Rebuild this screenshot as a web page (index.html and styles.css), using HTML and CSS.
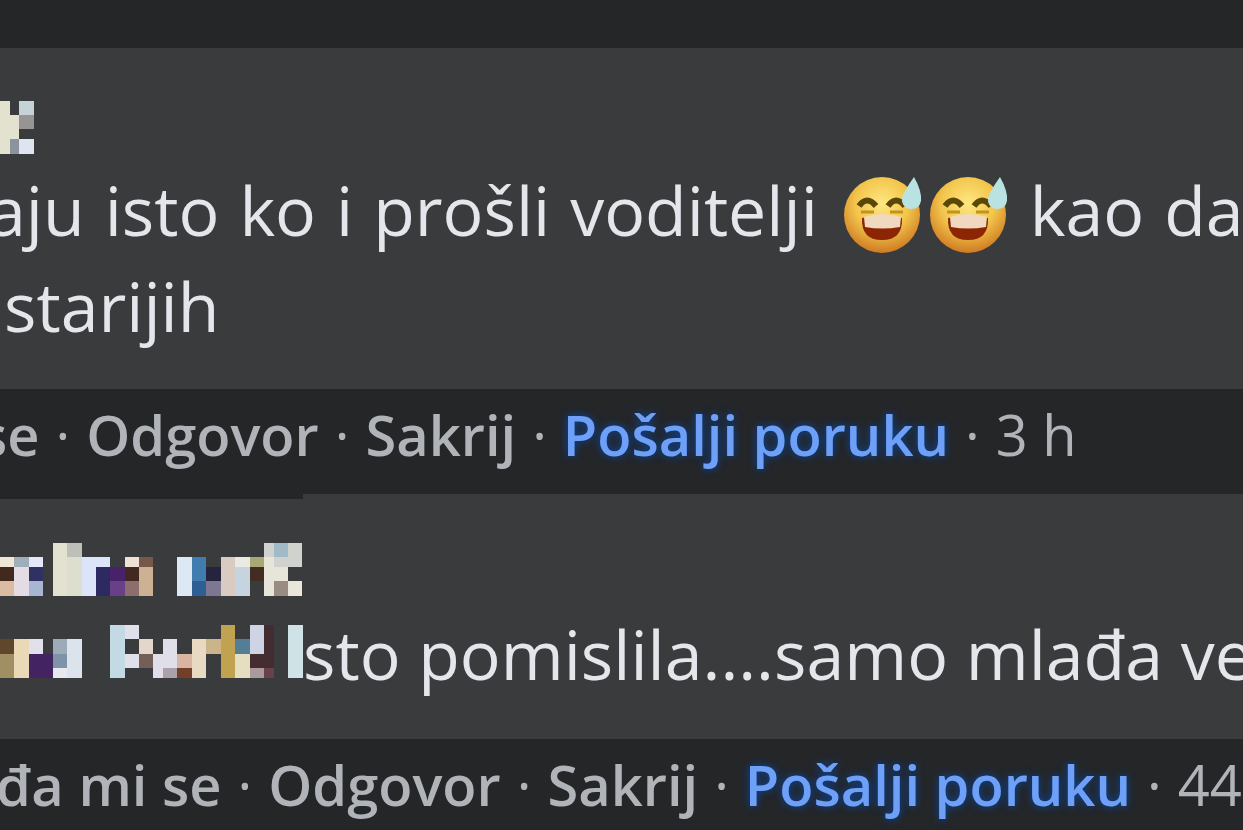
FILE: index.html
```html
<!DOCTYPE html>
<html lang="hr">
<head>
<meta charset="utf-8">
<title>Komentari</title>
<link rel="stylesheet" href="styles.css">
</head>
<body>
<svg class="defs" aria-hidden="true">
  <defs>
    <radialGradient id="face" cx="50%" cy="35%" r="65%">
      <stop offset="0" stop-color="#ffe783"/>
      <stop offset="0.55" stop-color="#f2c54b"/>
      <stop offset="1" stop-color="#cf7a22"/>
    </radialGradient>
    <symbol id="sweat" viewBox="0 0 80 80">
      <circle cx="38" cy="40" r="38" fill="url(#face)"/>
      <path d="M15 31q8-11 17 0M44 31q8-11 17 0" fill="none" stroke="#5c4806" stroke-width="6"/>
      <path d="M17 37h13M46 37h13" stroke="#c2941f" stroke-width="3"/>
      <path d="M18 43q20-4 40 0q1 22-20 22T18 43z" fill="#8c2503"/>
      <path d="M20 42q18-6 37 0l-1 10q-18 3-35 0z" fill="#f0d9bf"/>
      <path d="M70 2q8 14 7 24q-2 9-11 8q-9-2-8-11q2-7 12-21z" fill="#b9e2e2"/>
    </symbol>
  </defs>
</svg>
<main class="thread">
  <article class="comment">
    <div class="bubble">
      <svg class="name" width="302" height="53" aria-hidden="true" shape-rendering="crispEdges">
        <path fill="#e2e2ce" d="M0 0h10v14h9v24h-9v15H0z"/>
        <path fill="#c5d2d8" d="M19 0h15v14H19z"/>
        <path fill="#979594" d="M19 14h15v14H19z"/>
        <path fill="#8b939e" d="M10 38h9v15h-9z"/>
        <path fill="#dfe5f0" d="M19 38h15v15H19z"/>
      </svg>
      <p class="text first"><span>aju</span> <span>isto</span> <span>ko</span> <span>i</span> <span>prošli</span> <span>voditelji</span> <span class="emojis"><svg class="emoji" role="img" aria-label="😅"><use href="#sweat"/></svg><svg class="emoji" role="img" aria-label="😅"><use href="#sweat"/></svg></span> <span>kao</span> <span>da</span></p>
      <p class="text second">starijih</p>
    </div>
    <div class="actions short">
      <button>se</button><i>·</i><button>Odgovor</button><i>·</i><button>Sakrij</button><i>·</i><button class="message">Pošalji poruku</button><i>·</i><time>3 h</time>
    </div>
  </article>
  <article class="comment">
    <div class="bubble stepped">
      <svg class="name" width="302" height="53" aria-hidden="true" shape-rendering="crispEdges">
        <path fill="#eee7d5" d="M0 14h14v10H0z"/>
        <path fill="#9eafbb" d="M14 14h15v10H14z"/>
        <path fill="#e5e6f9" d="M29 14h14v10H29z"/>
        <path fill="#42291e" d="M0 24h14v14H0z"/>
        <path fill="#e4dce4" d="M14 24h15v29H14z"/>
        <path fill="#303162" d="M29 24h14v14H29z"/>
        <path fill="#dbbba2" d="M0 38h14v15H0z"/>
        <path fill="#a9b6d3" d="M29 38h14v15H29z"/>
        <path fill="#e3e2d1" d="M53 0h14v53H53z"/>
        <path fill="#bcc0b8" d="M67 0h15v14H67z"/>
        <path fill="#dcdfce" d="M67 14h15v39H67z"/>
        <path fill="#dce4fa" d="M82 14h28v10H96v29H82z"/>
        <path fill="#2d2a62" d="M96 24h14v29H96z"/>
        <path fill="#472169" d="M110 24h15v14h-15z"/>
        <path fill="#684087" d="M110 38h15v15h-15z"/>
        <path fill="#eee2d6" d="M125 14h14v10h-14z"/>
        <path fill="#42291f" d="M125 24h14v14h-14z"/>
        <path fill="#8e6d6d" d="M125 38h14v15h-14z"/>
        <path fill="#76584a" d="M139 14h14v10h-14z"/>
        <path fill="#cdb193" d="M139 24h14v29h-14z"/>
        <path fill="#dce9f4" d="M177 14h15v39h-15z"/>
        <path fill="#417cae" d="M192 14h14v24h-14z"/>
        <path fill="#2d5f94" d="M192 38h14v15h-14z"/>
        <path fill="#25243f" d="M206 24h15v14h-15z"/>
        <path fill="#7d7791" d="M206 38h15v15h-15z"/>
        <path fill="#d9cbc2" d="M221 14h14v39h-14z"/>
        <path fill="#eae9e2" d="M235 14h15v10h-15z"/>
        <path fill="#c5d4df" d="M235 24h15v29h-15z"/>
        <path fill="#aaa777" d="M250 14h14v10h-14z"/>
        <path fill="#432c22" d="M250 24h14v14h-14z"/>
        <path fill="#d0d3cd" d="M264 0h38v24h-38z"/>
        <path fill="#a1bac7" d="M274 0h14v14h-14z"/>
        <path fill="#e7e4d9" d="M264 14h10v10h14v14h-14v15h-10z"/>
        <path fill="#998c82" d="M274 38h14v15h-14z"/>
        <path fill="#ebe6dc" d="M288 38h14v15h-14z"/>
      </svg>
      <p class="text reply">
        <svg class="mention" width="303" height="53" aria-hidden="true" shape-rendering="crispEdges">
          <path fill="#60462b" d="M0 14h14v15H0z"/>
          <path fill="#a08f63" d="M0 29h14v24H0z"/>
          <path fill="#e9d9b7" d="M14 14h15v39H14z"/>
          <path fill="#e0e1eb" d="M29 14h14v15H29z"/>
          <path fill="#432361" d="M29 29h24v24H29z"/>
          <path fill="#9dabb9" d="M53 14h14v15H53z"/>
          <path fill="#7e92a8" d="M53 29h14v14H53z"/>
          <path fill="#e8e8ef" d="M53 43h14v10H53z"/>
          <path fill="#dbe4ed" d="M67 14h15v39H67z"/>
          <path fill="#c3dae5" d="M110 0h15v53h-15z"/>
          <path fill="#dfe0e9" d="M125 0h14v14h-14zM125 29h14v14h-14z"/>
          <path fill="#e3d7cd" d="M139 14h14v15h-14z"/>
          <path fill="#735f57" d="M139 29h14v14h-14z"/>
          <path fill="#e0dfe9" d="M153 29h10V14h14v29h-14v10h-10z"/>
          <path fill="#aaa1ad" d="M163 43h14v10h-14z"/>
          <path fill="#d9b4a0" d="M177 29h15v14h-15z"/>
          <path fill="#733f28" d="M177 43h15v10h-15z"/>
          <path fill="#e8d9c3" d="M192 14h14v39h-14z"/>
          <path fill="#ccb48a" d="M206 14h15v15h-15z"/>
          <path fill="#c0a250" d="M221 0h14v53h-14z"/>
          <path fill="#557d96" d="M235 14h15v15h-15z"/>
          <path fill="#e6dec1" d="M235 29h15v24h-15z"/>
          <path fill="#cdd5e4" d="M250 0h14v29h-14z"/>
          <path fill="#442d31" d="M264 0h10v29h-10zM250 29h24v14h-24z"/>
          <path fill="#aa9a9d" d="M250 43h14v10h-14z"/>
          <path fill="#674248" d="M264 43h10v10h-10z"/>
          <path fill="#cfe3e7" d="M288 0h15v53h-15z"/>
        </svg><span>sto pomislila....samo mlađa ve</span>
      </p>
    </div>
    <div class="actions">
      <button>đa mi se</button><i>·</i><button>Odgovor</button><i>·</i><button>Sakrij</button><i>·</i><button class="message">Pošalji poruku</button><i>·</i><time>44</time>
    </div>
  </article>
</main>
</body>
</html>
```
FILE: styles.css
```css
* { box-sizing: border-box; }
body {
  margin: 0;
  background: #242628;
  color: #e4e6eb;
  font-family: "Open Sans", "Noto Sans", sans-serif;
  overflow: hidden;
}
.defs { position: absolute; width: 0; height: 0; }
.thread { padding-top: 48px; overflow: hidden; }
.bubble {
  position: relative;
  background: #3a3b3c;
  padding: 53px 0 35px;
}
.stepped { padding: 49px 0 37px; }
.stepped::before {
  content: "";
  position: absolute;
  top: 0;
  left: 0;
  width: 303px;
  height: 5px;
  background: #242628;
}
.name { display: block; margin-bottom: 8px; }
.stepped .name { margin-bottom: 10px; }
.text {
  display: flex;
  align-items: center;
  margin: 0;
  font-size: 68px;
  line-height: 96px;
  white-space: nowrap;
}
.first { gap: 20px; margin-left: -12px; }
.second { padding-left: 4px; }
.mention { flex: none; margin-bottom: 6px; }
.emojis { display: flex; gap: 6px; margin: 10px 0 0 6px; }
.emoji { width: 80px; height: 80px; }
.actions {
  display: flex;
  align-items: center;
  gap: 16px;
  height: 105px;
  padding-bottom: 16px;
  margin-left: -4px;
  color: #b0b3b8;
  font-size: 56px;
  line-height: 80px;
  white-space: nowrap;
}
.short { margin-left: -20px; }
.actions button {
  padding: 0;
  border: 0;
  background: none;
  color: inherit;
  font: inherit;
  font-weight: 600;
}
.actions i { font-style: normal; }
.actions .message { color: #6ea0f8; text-shadow: 0 0 8px #0848a8; }
```
